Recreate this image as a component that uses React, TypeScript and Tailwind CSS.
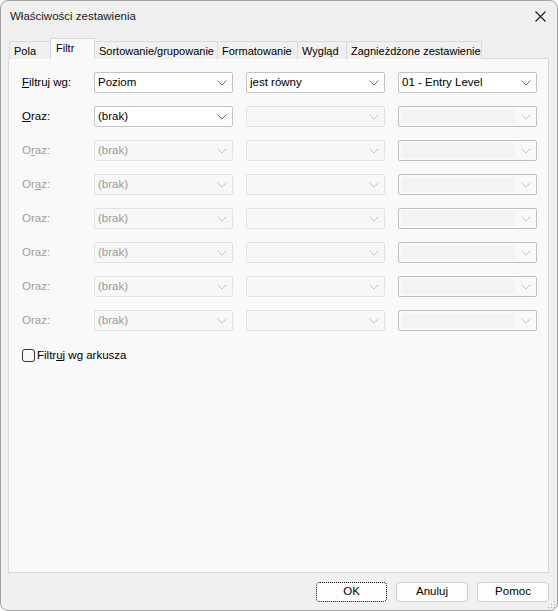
import React from "react";

const font = { fontFamily: '"Liberation Sans", Arial, sans-serif' };

function Chevron({ disabled }: { disabled?: boolean }) {
  return (
    <svg width="10" height="6" viewBox="0 0 10 6" className="shrink-0">
      <path
        d="M0.5 0.5 L5 5 L9.5 0.5"
        fill="none"
        stroke={disabled ? "#c6c6c6" : "#6e6e6e"}
        strokeWidth="1"
      />
    </svg>
  );
}

type ComboKind = "enabled" | "disabledLight" | "disabledDark";

function Combo({ kind, text, w }: { kind: ComboKind; text?: string; w: string }) {
  if (kind === "enabled") {
    return (
      <div className={`${w} h-[21px] shrink-0 flex items-center border border-[#c4c4c4] bg-white rounded-[2px] pl-[3px] pr-[5px]`}>
        <span className="flex-1 text-[11.5px] text-black leading-none truncate">{text}</span>
        <Chevron />
      </div>
    );
  }
  if (kind === "disabledLight") {
    return (
      <div className={`${w} h-[21px] shrink-0 flex items-center border border-[#e3e3e3] bg-[#f7f7f7] rounded-[2px] pl-[3px] pr-[5px]`}>
        <span className="flex-1 text-[11.5px] text-[#9a9a9a] leading-none truncate">{text}</span>
        <Chevron disabled />
      </div>
    );
  }
  return (
    <div className={`${w} h-[21px] shrink-0 flex items-center border border-[#c0c0c0] bg-[#f9f9f9] rounded-[2px] pl-[2px] pr-[5px]`}>
      <div className="flex-1 h-[15px] bg-[#f3f3f3] mr-[6px]" />
      <Chevron disabled />
    </div>
  );
}

function Label({ children, disabled }: { children: React.ReactNode; disabled?: boolean }) {
  return (
    <div className={`w-[72px] shrink-0 text-[11.5px] leading-none ${disabled ? "text-[#a0a0a0]" : "text-black"}`}>
      {children}
    </div>
  );
}

export default function App() {
  const disabledLabels: React.ReactNode[] = [
    <>O<span className="underline">r</span>az:</>,
    <>Or<span className="underline">a</span>z:</>,
    <>Oraz:</>,
    <>Oraz:</>,
    <>Oraz:</>,
    <>Oraz:</>,
  ];

  const tabs = [
    { label: "Pola", w: "w-[41px]", cls: "border-l border-t", sel: false },
    { label: "Filtr", w: "w-[45px]", cls: "border-l border-t border-r", sel: true },
    { label: "Sortowanie/grupowanie", w: "w-[123px]", cls: "border-t border-r", sel: false },
    { label: "Formatowanie", w: "w-[80px]", cls: "border-t border-r", sel: false },
    { label: "Wygląd", w: "w-[49px]", cls: "border-t border-r", sel: false },
    { label: "Zagnieżdżone zestawienie", w: "w-[135px]", cls: "border-t border-r", sel: false },
  ];

  return (
    <div className="w-[558px] h-[611px] bg-white" style={font}>
      <div className="relative w-[558px] h-[611px] box-border border border-[#a3a3a3] rounded-[8px] bg-[#f0f0f0] overflow-hidden flex flex-col">
        {/* Title bar */}
        <div className="h-[31px] shrink-0 flex items-center justify-between pl-[9px] pr-[11px]">
          <span className="text-[11.5px] text-[#1a1a1a] leading-none">Właściwości zestawienia</span>
          <svg width="11" height="11" viewBox="0 0 11 11">
            <path d="M0.5 0.5 L10.5 10.5 M10.5 0.5 L0.5 10.5" stroke="#1a1a1a" strokeWidth="1.1" fill="none" />
          </svg>
        </div>
        <div className="h-[6px] shrink-0" />

        {/* Tabs */}
        <div className="relative z-10 h-[21px] shrink-0 flex items-end pl-[8px]">
          {tabs.map((t) =>
            t.sel ? (
              <div
                key={t.label}
                className={`${t.w} h-[21px] ${t.cls} border-[#d9d9d9] bg-[#f9f9f9] text-[11px] text-black leading-none pl-[5px] pt-[4px]`}
              >
                {t.label}
              </div>
            ) : (
              <div
                key={t.label}
                className={`${t.w} h-[18px] ${t.cls} border-[#d9d9d9] bg-[#f0f0f0] text-[11px] text-black leading-none pl-[4px] pt-[4px] whitespace-nowrap`}
              >
                {t.label}
              </div>
            )
          )}
        </div>

        {/* Panel */}
        <div className="mx-[7px] -mt-px w-[541px] h-[515px] shrink-0 border border-[#d9d9d9] bg-[#f9f9f9] pl-[13px] pt-[13px] flex flex-col">
          <div className="flex flex-col gap-[13px]">
            <div className="flex items-center h-[21px]">
              <Label>
                <span className="underline">F</span>iltruj wg:
              </Label>
              <Combo kind="enabled" text="Poziom" w="w-[139px]" />
              <div className="w-[13px] shrink-0" />
              <Combo kind="enabled" text="jest równy" w="w-[139px]" />
              <div className="w-[13px] shrink-0" />
              <Combo kind="enabled" text="01 - Entry Level" w="w-[139px]" />
            </div>
            <div className="flex items-center h-[21px]">
              <Label>
                <span className="underline">O</span>raz:
              </Label>
              <Combo kind="enabled" text="(brak)" w="w-[139px]" />
              <div className="w-[13px] shrink-0" />
              <Combo kind="disabledLight" w="w-[139px]" />
              <div className="w-[13px] shrink-0" />
              <Combo kind="disabledDark" w="w-[139px]" />
            </div>
            {disabledLabels.map((l, i) => (
              <div key={i} className="flex items-center h-[21px]">
                <Label disabled>{l}</Label>
                <Combo kind="disabledLight" text="(brak)" w="w-[139px]" />
                <div className="w-[13px] shrink-0" />
                <Combo kind="disabledLight" w="w-[139px]" />
                <div className="w-[13px] shrink-0" />
                <Combo kind="disabledDark" w="w-[139px]" />
              </div>
            ))}
          </div>

          <div className="mt-[18px] flex items-center h-[13px]">
            <div className="w-[13px] h-[13px] border border-[#333333] rounded-[3px] bg-[#f9f9f9] shrink-0" />
            <span className="ml-[2px] text-[11.5px] text-black leading-none">
              Filtr<span className="underline">u</span>j wg arkusza
            </span>
          </div>
        </div>

        {/* Buttons */}
        <div className="mt-[9px] flex justify-end gap-[9px] pr-[8px]">
          <div className="w-[71px] h-[20px] border border-dotted border-black rounded-[4px] bg-[#fdfdfd] flex items-center justify-center text-[11.5px] text-black leading-none">
            OK
          </div>
          <div className="w-[72px] h-[20px] border border-[#d0d0d0] rounded-[4px] bg-[#fdfdfd] flex items-center justify-center text-[11.5px] text-black leading-none">
            Anuluj
          </div>
          <div className="w-[72px] h-[20px] border border-[#d0d0d0] rounded-[4px] bg-[#fdfdfd] flex items-center justify-center text-[11.5px] text-black leading-none">
            Pomoc
          </div>
        </div>

        {/* Resize grip */}
        <svg className="absolute right-[1px] bottom-[1px]" width="9" height="9" viewBox="0 0 9 9">
          <rect x="7" y="1" width="1" height="1" fill="#a8a8a8" />
          <rect x="4" y="4" width="1" height="1" fill="#a8a8a8" />
          <rect x="7" y="4" width="1" height="1" fill="#a8a8a8" />
          <rect x="1" y="7" width="1" height="1" fill="#a8a8a8" />
          <rect x="4" y="7" width="1" height="1" fill="#a8a8a8" />
          <rect x="7" y="7" width="1" height="1" fill="#a8a8a8" />
        </svg>
      </div>
    </div>
  );
}
